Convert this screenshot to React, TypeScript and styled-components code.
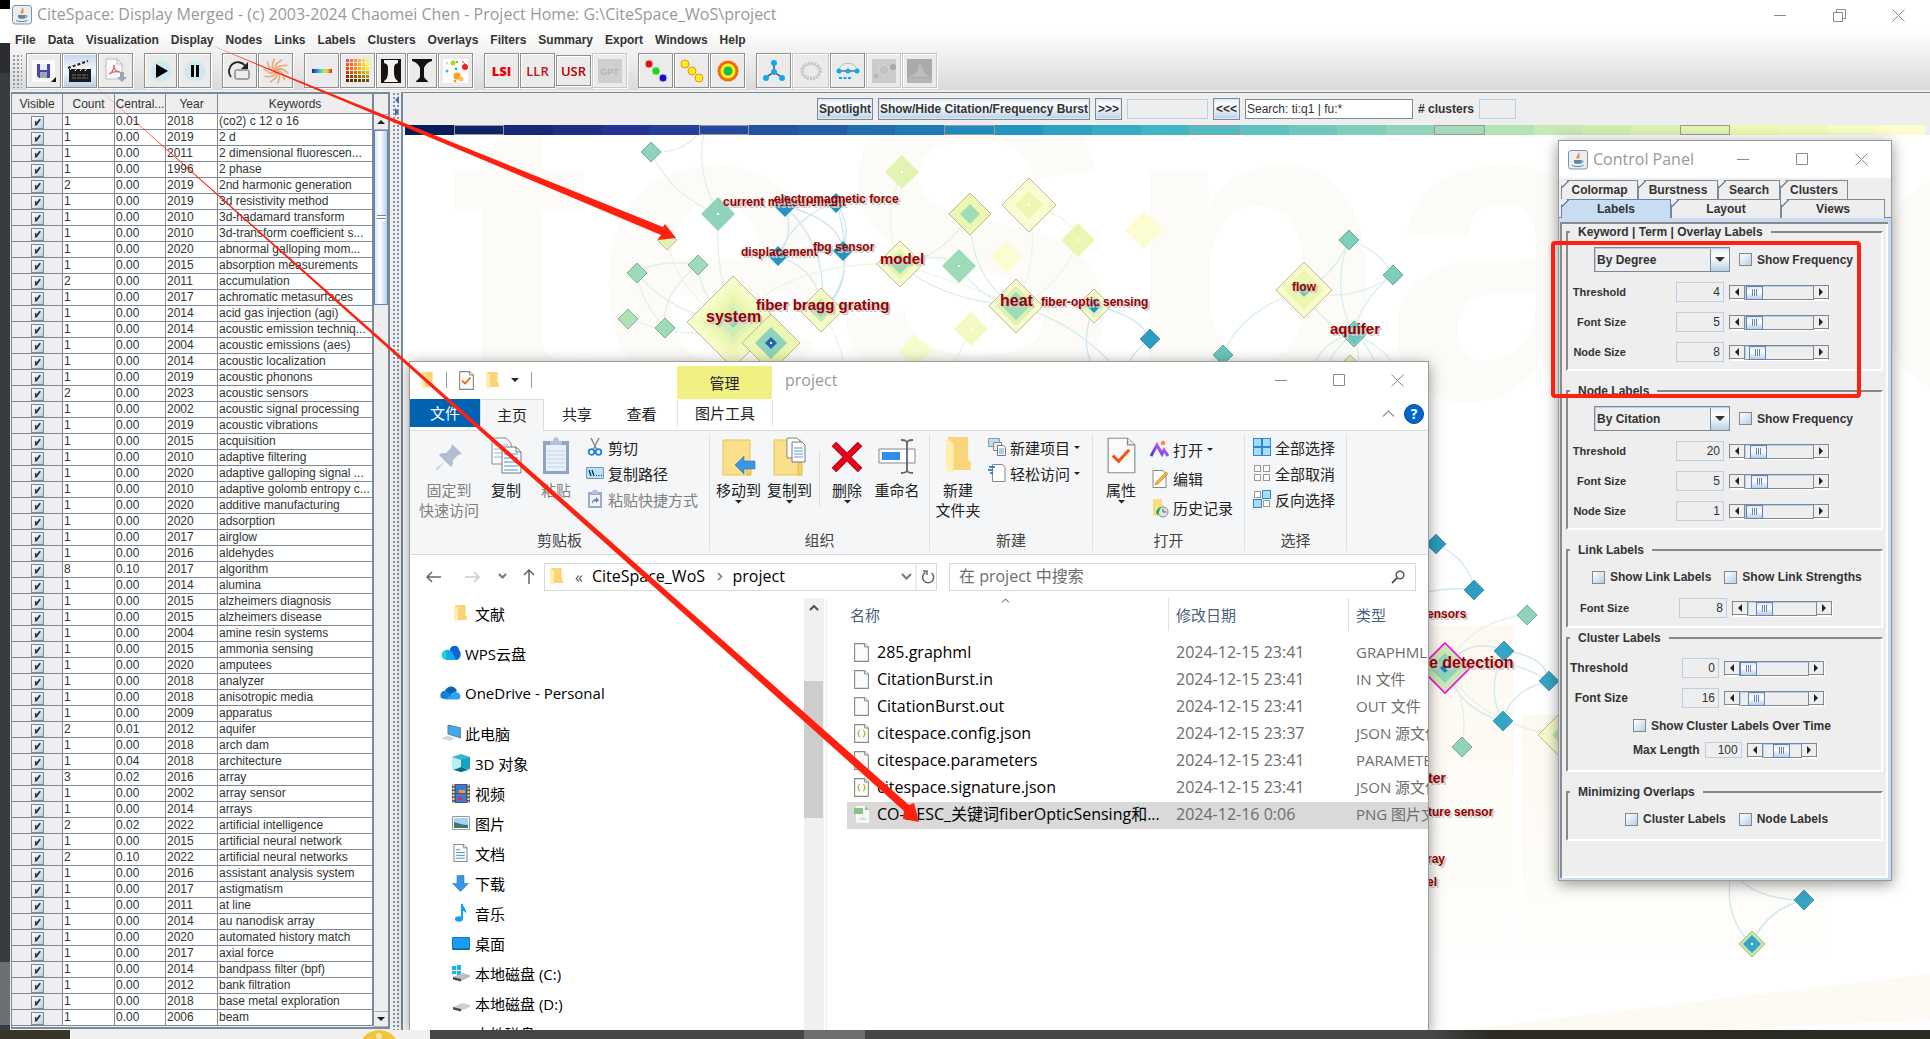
import React from 'react';
import styled, { createGlobalStyle, css } from 'styled-components';

const JAVA = `"Liberation Sans", Arial, sans-serif`;
const WIN = `"Open Sans", "Noto Sans CJK SC", sans-serif`;
const LINE = '#7a8a99';
const METAL = 'linear-gradient(#e4edf6 0%, #ffffff 35%, #b8cfe5 100%)';

const GlobalStyle = createGlobalStyle`
  * { box-sizing: border-box; }
  body { margin: 0; overflow: hidden; font-family: ${JAVA}; font-size: 12px; color: #333; }
  button, input, select { font: inherit; color: inherit; margin: 0; padding: 0; border-radius: 0; }
  svg { display: block; flex: none; }
`;

/* ---------- desktop ---------- */
const Desktop = styled.div`
  position: relative; height: 100vh; display: flex; flex-direction: column;
  background: #fff; overflow: hidden;
`;
const Upper = styled.div`
  position: relative; flex: 1; min-height: 0; display: flex; overflow: hidden;
`;
const BehindStrip = styled.div`
  width: 10px; flex: none;
  background: linear-gradient(#000 0 9px, #fff 9px 43px, #2b2d30 43px 73px, #363c3f 73px 962px, #6b6e73 962px 1025px, #363c3f 1025px);
`;
const AppWindow = styled.main`flex: 1; min-width: 0; display: flex; flex-direction: column; background: #eee;`;

const TitleBar = styled.header<{ $h: number }>`
  display: flex; align-items: center; height: ${p => p.$h}px; flex: none; background: #fff;
  font-family: ${WIN}; font-size: 16px; color: #999;
`;
const TitleText = styled.h1`margin: 0; font-size: inherit; font-weight: 400; white-space: nowrap; flex: 1; line-height: 20px; padding-bottom: 2px;`;
const WinButtons = styled.div<{ $gap: number; $end: number }>`
  display: flex; gap: ${p => p.$gap}px; padding-right: ${p => p.$end}px;
`;
const WinButton = styled.button`
  border: 0; background: none; width: 13px; height: 13px; color: #8a8a8a;
`;

const Chrome = styled.div`background: linear-gradient(#fff, #dadada); height: 62px; flex: none; border-bottom: 2px solid #eee;`;
const MenuBar = styled.nav`display: flex; gap: 12px; height: 20px; padding-left: 5px; align-items: center;`;
const MenuItem = styled.button`border: 0; background: none; font-weight: 700; line-height: 20px;`;
const ToolBar = styled.div`display: flex; align-items: center; height: 41px; gap: 11px;`;
const Grip = styled.div`
  width: 10px; height: 34px; margin-left: 2px; margin-right: -7px;
  background: radial-gradient(circle, #8a99a8 0.8px, transparent 1px) 0 0 / 4px 4px;
`;
const ToolGroup = styled.div`display: flex; gap: 1px; align-items: center;`;
const Tool = styled.button<{ $w?: number; $h?: number; $on?: boolean; $off?: boolean }>`
  width: ${p => p.$w ?? 35}px; height: ${p => p.$h ?? 35}px;
  display: flex; align-items: center; justify-content: center; overflow: hidden;
  border: 1px solid ${p => (p.$off ? '#c6c6c6' : '#8f8f8f')};
  box-shadow: inset 1px 1px 0 #fff, 1px 1px 0 #fff;
  background: ${p => (p.$on ? 'linear-gradient(#c3d6ea, #f4f8fc 50%, #b8cfe5)' : '#ebebeb')};
`;
const ToolWord = styled.span<{ $c: string; $b?: boolean }>`
  font-family: "Open Sans", sans-serif; font-size: 13px; line-height: 20px;
  font-weight: ${p => (p.$b ? 800 : 600)}; color: ${p => p.$c};
`;
const GptTile = styled.span`
  background: #cfcfcf; color: #b5b5b5; width: 24px; height: 24px; font-size: 9px; line-height: 26px; font-weight: 700;
`;

const Split = styled.div`flex: 1; min-height: 0; display: flex;`;

/* ---------- keyword table ---------- */
const TablePane = styled.section`
  display: flex; flex: none; margin: 0 2px 1px 1px; background: #eee; overflow: hidden;
  border: 2px solid ${LINE}; border-left-width: 1px;
`;
const Keywords = styled.table`
  border-collapse: separate; border-spacing: 0; table-layout: fixed; width: 362px; flex: none;
  font-size: 12px; align-self: flex-start; border-right: 2px solid ${LINE};
  th { height: 20px; font-weight: 400; padding: 2px 0 0; line-height: 17px; border-right: 1px solid ${LINE}; border-bottom: 1px solid ${LINE}; background: #eee; }
  td { height: 16px; padding: 0 0 0 1px; line-height: 15px; white-space: nowrap; overflow: hidden; background: #fff;
    border-right: 1px solid ${LINE}; border-bottom: 1px solid ${LINE}; }
  td:first-child { background: #eee; text-align: center; padding: 0; }
  th:last-child, td:last-child { border-right: 0; }
`;
const ColV = styled.col`width: 51px;`;
const ColC = styled.col`width: 52px;`;
const ColCe = styled.col`width: 51px;`;
const ColY = styled.col`width: 52px;`;

const boxLook = css`
  appearance: none; width: 13px; height: 13px; border: 1px solid ${LINE};
  background: linear-gradient(135deg, #fff, #dce7f2 50%, #b8cfe5); flex: none;
`;
const Tick = styled.input.attrs({ type: 'checkbox' })`
  ${boxLook}
  display: block; margin: 1px auto 0; position: relative;
  &:checked::after { content: ''; position: absolute; left: 3px; top: 2px; width: 6px; height: 7px;
    background: #333; clip-path: polygon(0 35%, 30% 35%, 30% 60%, 85% 0, 100% 0, 100% 25%, 35% 100%, 0 100%); }
`;
const VBar = styled.div`width: 14px; display: flex; flex-direction: column; margin-top: 20px;`;
const VBarBtn = styled.button`
  height: 16px; border: 1px solid #a5b1bd; border-width: 1px 0; background: #eee; display: flex; align-items: center; justify-content: center; flex: none;
`;
const VThumb = styled.div`
  height: 175px; border: 1px solid #6382bf; background: linear-gradient(90deg, #dce7f3, #fff 40%, #b8cfe5);
  display: flex; align-items: center; justify-content: center;
  &::after { content: ''; width: 9px; height: 6px; background: repeating-linear-gradient(#6382bf 0 1px, #fff 1px 3px); }
`;
const Fill = styled.div`flex: 1;`;
const Divider = styled.div`
  width: 9px; flex: none; display: flex; flex-direction: column; align-items: center; gap: 4px; padding-top: 4px;
  background: radial-gradient(circle, #8494a4 0.8px, transparent 1px) 0 40px / 4px 4px, #eee;
`;

/* ---------- visualization ---------- */
const GraphPane = styled.section`
  flex: 1; min-width: 0; display: flex; flex-direction: column;
  border-left: 2px solid ${LINE}; border-top: 1px solid ${LINE};
`;
const SearchBar = styled.div`
  height: 32px; flex: none; display: flex; align-items: center; justify-content: center; gap: 5px; font-weight: 700;
`;
const MetalButton = styled.button`
  height: 22px; min-width: 27px; padding: 0 1px; border: 1px solid ${LINE}; background: ${METAL}; font-weight: 700; white-space: nowrap;
  box-shadow: inset 0 0 0 1px #dfe9f3;
`;
const Field = styled.input<{ $w: number; $h?: number; $off?: boolean; $right?: boolean }>`
  width: ${p => p.$w}px; height: ${p => p.$h ?? 20}px; flex: none; font-weight: 400; padding: 0 ${p => (p.$right ? 3 : 1)}px 0 1px;
  background: ${p => (p.$off ? '#eee' : '#fff')}; border: 1px solid ${p => (p.$off ? '#b8cfe5' : LINE)};
  text-align: ${p => (p.$right ? 'right' : 'left')};
`;
const Years = styled.div`display: flex; height: 10px; flex: none; padding: 0 5px 0 2px;`;
const Year = styled.div<{ $c: string; $mark: boolean }>`
  flex: 1; background: ${p => p.$c}; border: ${p => (p.$mark ? '1px solid #999' : '0')};
`;
const Canvas = styled.div`flex: 1; min-height: 0; background: #fff; overflow: hidden;`;

/* ---------- floating windows ---------- */
const Floating = styled.section`
  position: absolute; background: #fff; border: 1px solid #9b9b9b; box-shadow: 0 3px 14px rgba(0, 0, 0, 0.42);
  display: flex; flex-direction: column;
`;
const ExplorerWin = styled(Floating)`
  left: 409px; top: 361px; bottom: -1px; width: 1020px; font-family: ${WIN}; font-size: 15px; color: #222; overflow: hidden;
`;
const ExTop = styled.div`height: 37px; display: flex; flex: none; align-items: center; padding-left: 11px;`;
const Quick = styled.div`display: flex; align-items: center; width: 256px; gap: 12px; padding-bottom: 1px;`;
const QSep = styled.span`width: 1px; height: 16px; background: #999;`;
const ManageTab = styled.div`
  width: 95px; align-self: flex-end; height: 33px; background: #f0f083; text-align: center; line-height: 34px;
`;
const ExTitle = styled.span`margin-left: 13px; color: #999; flex: 1; padding-bottom: 2px; font-size: 16px; line-height: 20px;`;
const Tabs = styled.div`display: flex; height: 32px; flex: none; border-bottom: 1px solid #dadbdc; position: relative;`;
const Tab = styled.button<{ $w: number; $kind?: 'file' | 'on' | 'ctx' }>`
  width: ${p => p.$w}px; height: 31px; border: 0; background: none; text-align: center; line-height: 28px; padding-bottom: 2px;
  ${p => p.$kind === 'file' && css`background: #0063b1; color: #fff; height: 28px;`}
  ${p => p.$kind === 'on' && css`background: #f5f6f7; border: 1px solid #dadbdc; border-bottom: 0; height: 32px;`}
  ${p => p.$kind === 'ctx' && css`border: solid #e3e3e3; border-width: 0 1px; margin-left: 4px; height: 28px;`}
`;
const Ribbon = styled.div`height: 124px; flex: none; display: flex; background: #f5f6f7; border-bottom: 1px solid #dadbdc; padding: 3px 0;`;
const Group = styled.div<{ $w: number; $pad: number }>`
  width: ${p => p.$w}px; padding-left: ${p => p.$pad}px; border-right: 1px solid #e0e1e2; display: flex; flex-direction: column;
`;
const GroupBody = styled.div`flex: 1; display: flex; align-items: flex-start;`;
const GroupName = styled.div<{ $pad: number }>`
  text-align: center; line-height: 20px; margin-left: -${p => p.$pad}px; color: #444; padding-bottom: 1px;
`;
const Big = styled.button<{ $w: number; $off?: boolean }>`
  width: ${p => p.$w}px; padding: 3px 0 0; border: 0; background: none; display: flex; flex-direction: column; align-items: center;
  line-height: 20px; white-space: nowrap; color: ${p => (p.$off ? '#808080' : '#222')};
`;
const BigIcon = styled.span`height: 43px; display: flex;`;
const SmallList = styled.div<{ $pad: number }>`padding-left: ${p => p.$pad}px;`;
const Small = styled.button<{ $h: number; $off?: boolean }>`
  height: ${p => p.$h}px; border: 0; background: none; display: flex; align-items: center; gap: 4px; white-space: nowrap;
  color: ${p => (p.$off ? '#808080' : '#222')};
`;
const VSep = styled.span`width: 1px; height: 55px; background: #dcdddd; margin: 17px 1px 0 4px;`;
const AddressRow = styled.div`display: flex; align-items: center; height: 43px; flex: none; padding: 0 12px 0 16px;`;
const NavIcon = styled.button<{ $w: number }>`
  width: ${p => p.$w}px; height: 20px; border: 0; background: none; display: flex; align-items: center;
`;
const Address = styled.div`
  flex: 1; height: 28px; border: 1px solid #d9d9d9; display: flex; align-items: center; color: #000; padding-left: 5px; margin-right: 12px;
  font-size: 16px; line-height: 22px;
`;
const Crumb = styled.a`color: inherit; text-decoration: none; white-space: nowrap; padding-bottom: 2px;`;
const CrumbSep = styled.span<{ $l: number; $r: number }>`margin: 0 ${p => p.$r}px 0 ${p => p.$l}px; display: flex; color: #555;`;
const SearchBox = styled.label`
  width: 467px; height: 28px; border: 1px solid #d9d9d9; display: flex; align-items: center; padding: 0 10px 0 9px; font-size: 16px;
`;
const SearchInput = styled.input`
  border: 0; outline: 0; flex: 1; min-width: 0; height: 26px; background: none; padding-bottom: 2px;
  &::placeholder { color: #6d6d6d; opacity: 1; }
`;
const Body = styled.div`flex: 1; min-height: 0; display: flex;`;
const Tree = styled.ul`
  list-style: none; margin: 0; padding: 0 0 0 30px; width: 394px; flex: none; overflow: hidden; color: #000;
`;
const TreeItem = styled.li<{ $deep?: boolean; $gap?: boolean }>`
  height: 30px; display: flex; align-items: center; white-space: nowrap; margin-bottom: ${p => (p.$gap ? 10 : 0)}px;
  padding-left: ${p => (p.$deep ? 10 : 0)}px; gap: 4px;
`;
const TreeIcon = styled.span`width: 21px; display: flex; justify-content: center;`;
const TreeScroll = styled.div`width: 20px; background: #f0f0f0; flex: none; display: flex; flex-direction: column; align-items: stretch;`;
const ScrollUp = styled.button`border: 0; background: none; height: 83px; display: flex; justify-content: center; padding-top: 7px; color: #505050;`;
const ScrollThumb = styled.div`height: 137px; background: #cdcdcd; margin-right: 1px;`;
const FilePane = styled.div`flex: 1; min-width: 0; margin-left: 2px; border-left: 1px solid #ececec; padding-left: 20px; overflow: hidden;`;
const Files = styled.table`
  width: 650px; table-layout: fixed; border-collapse: separate; border-spacing: 0;
  th { height: 33px; font-weight: 400; text-align: left; color: #4c607a; padding: 0 0 0 7px; border-right: 1px solid #e0e0e0; position: relative; }
  th:first-child { padding-left: 3px; }
  td { height: 27px; line-height: 24px; font-size: 16px; padding: 0 0 3px 7px; white-space: nowrap; overflow: hidden; color: #6d6d6d; }
  td:last-child { font-size: 15px; }
  tbody::before { content: ''; display: block; height: 9px; }
`;
const FileRow = styled.tr<{ $sel?: boolean }>`background: ${p => (p.$sel ? '#d9d9d9' : 'transparent')};`;
const FileName = styled.span`display: flex; align-items: center; gap: 8px; color: #000;`;
const SortMark = styled.span`position: absolute; left: 154px; top: 0;`;

/* ---------- control panel ---------- */
const PanelWin = styled(Floating)`right: 38px; top: 140px; width: 334px; height: 741px; background: #eee; font-weight: 700;`;
const TabRow = styled.div`display: flex; height: 19px; padding-left: 2px; flex: none;`;
const PTab = styled.button<{ $w: number; $on?: boolean }>`
  width: ${p => p.$w}px; height: 19px; font-weight: 700; line-height: 18px; border: 1px solid ${p => (p.$on ? '#6382bf' : LINE)}; border-bottom: 0;
  background: linear-gradient(135deg, transparent 0 4px, ${p => (p.$on ? '#6382bf' : LINE)} 4px 5px, ${p => (p.$on ? '#c8ddf2' : '#eee')} 5px);
  clip-path: polygon(6px 0, 100% 0, 100% 100%, 0 100%, 0 6px);
`;
const PBody = styled.div`
  flex: 1; border: solid #c8ddf2; border-width: 4px 3px 2px 1px; box-shadow: inset 2px 2px 0 #8a8a8a, inset -2px -2px 0 #fff, 0 -1px 0 #6382bf;
  padding: 3px 5px 0 6px;
`;
const Frame = styled.fieldset<{ $h: number; $top: number; $mb?: number }>`
  margin: 0 0 ${p => p.$mb ?? 13}px; padding: ${p => p.$top}px 0 0; height: ${p => p.$h}px; min-width: 0;
  border: 2px solid; border-color: #888 #fff #fff #888;
`;
const Legend = styled.legend`padding: 0 8px; margin-left: 2px; line-height: 14px; font-size: 12px;`;
const Row = styled.div<{ $h: number; $pad?: number; $gap?: number }>`
  display: flex; align-items: center; height: ${p => p.$h}px; padding-left: ${p => p.$pad ?? 0}px; gap: ${p => p.$gap ?? 5}px;
`;
const Name = styled.label<{ $w?: number; $sm?: boolean; $mr?: number }>`
  ${p => p.$w && `width: ${p.$w}px;`} text-align: right; font-size: ${p => (p.$sm ? 11 : 12)}px; margin-right: ${p => p.$mr ?? 0}px; white-space: nowrap;
`;
const CheckLabel = styled.label`display: flex; align-items: center; gap: 5px; white-space: nowrap;`;
const CheckBox = styled.input.attrs({ type: 'checkbox' })`${boxLook}`;
const ComboWrap = styled.span`
  display: flex; position: relative;
  &::after { content: ''; position: absolute; right: 9px; top: 10px; border: 5px solid transparent; border-top-color: #333; border-bottom: 0; pointer-events: none; }
`;
const Combo = styled.select`
  appearance: none; width: 136px; height: 25px; border: 1px solid ${LINE}; font-weight: 700; padding-left: 2px; margin-right: 4px;
  background: linear-gradient(90deg, ${LINE} 1px, transparent 1px) right 0 top 0 / 19px 100% no-repeat,
    linear-gradient(#e4edf6, #fff 40%, #b8cfe5) right 0 top 0 / 19px 100% no-repeat, #eee;
  box-shadow: inset 1px 1px 0 #b8cfe5;
`;
const HBar = styled.div<{ $w: number }>`
  width: ${p => p.$w}px; height: 15px; display: flex; border: 1px solid ${LINE}; border-bottom-color: #fff; box-shadow: 1px 1px 0 #fff; flex: none;
`;
const HBtn = styled.button`width: 14px; border: 0; background: #eee; display: flex; align-items: center; justify-content: center; box-shadow: inset 0 -1px 0 ${LINE};`;
const thumb = css`
  appearance: none; width: 17px; height: 14px; border: 1px solid #6382bf; border-radius: 0;
  background: repeating-linear-gradient(90deg, #6382bf 0 1px, #fff 1px 2px) center / 5px 7px no-repeat, linear-gradient(#dce7f3, #fff 40%, #b8cfe5);
`;
const Range = styled.input.attrs({ type: 'range' })`
  appearance: none; flex: 1; min-width: 0; height: 14px; background: #eee; border: solid ${LINE}; border-width: 0 1px;
  box-shadow: inset 1px 1px 0 #b8cfe5, inset 0 -1px 0 ${LINE};
  &::-webkit-slider-thumb { ${thumb} }
`;

/* ---------- overlay & task bar ---------- */
const Marks = styled.svg`position: absolute; left: 0; top: 0; width: 100%; height: 100%; pointer-events: none;`;
const TaskBar = styled.footer`height: 9px; flex: none; display: flex; background: #464646; overflow: hidden;`;
const TaskPart = styled.div<{ $w: number; $c: string }>`width: ${p => p.$w}px; background: ${p => p.$c}; flex: none; display: flex; justify-content: flex-end;`;
const TaskRest = styled.div`flex: 1; background: linear-gradient(90deg, #464646, #2c2b23 60px);`;

/* ---------- icons ---------- */
const Java = () => (
  <svg width="20" height="20" viewBox="0 0 20 20">
    <rect x=".5" y=".5" width="19" height="18.5" rx="2.5" fill="#e9eef2" stroke="#7e93a5" />
    <path d="M10.6 3c1.500 1.800-3 2.800-1.200 5.600M12 5.500c-1.800 1-1.800 1.800-.8 3" stroke="#ea8a3c" strokeWidth="1.300" fill="none" />
    <path d="M6 10h7.500v1.500c0 1.500-1 2.300-2.200 2.300H8.200C7 13.800 6 13 6 11.500z" fill="#5f86a6" />
    <path d="M13.500 10.500c2.300-.5 2.300 2-.6 2.200M4 15.500c3 1.500 9 1.500 11.500-.3" stroke="#5f86a6" fill="none" />
  </svg>
);
const Min = () => <svg width="13" height="13"><path d="M0 6.500h12" stroke="currentColor" /></svg>;
const Max = () => <svg width="13" height="13"><path d="M.5.5h11v11H.5z" fill="none" stroke="currentColor" /></svg>;
const Restore = () => <svg width="13" height="13"><path d="M.5 3.500h9v9h-9zM3.500 3V.5h9v9H10" fill="none" stroke="currentColor" /></svg>;
const Close = () => <svg width="13" height="13"><path d="M.5.5l12 12M12.500.5l-12 12" stroke="currentColor" /></svg>;
const Tri = ({ d, s = 8, c = '#222' }: { d: 'up' | 'down' | 'left' | 'right'; s?: number; c?: string }) => {
  const h = s / 2;
  const p = { up: `0 ${h},${s} ${h},${h} 0`, down: `0 0,${s} 0,${h} ${h}`, left: `${h} 0,${h} ${s},0 ${h}`, right: `0 0,0 ${s},${h} ${h}` }[d];
  const tall = d === 'left' || d === 'right';
  return <svg width={tall ? h : s} height={tall ? s : h}><polygon points={p} fill={c} /></svg>;
};
const Chevron = ({ d, w = 12, c = '#777', sw = 1.5 }: { d: 'up' | 'down' | 'right'; w?: number; c?: string; sw?: number }) => {
  const h = w / 2;
  const p = d === 'up' ? `M1 ${h}L${h} 1L${w - 1} ${h}` : d === 'down' ? `M1 1L${h} ${h}L${w - 1} 1` : `M1 1L${h} ${h}L1 ${w - 1}`;
  return <svg width={d === 'right' ? h + 2 : w} height={d === 'right' ? w : h + 2}><path d={p} fill="none" stroke={c} strokeWidth={sw} /></svg>;
};
const Folder = ({ w = 13, h = 18 }: { w?: number; h?: number }) => (
  <svg width={w} height={h} viewBox="0 0 13 18" preserveAspectRatio="none">
    <path d="M1 0h10.500v11l1.500 1v4H1z" fill="#fcdc83" />
    <path d="M0 1l4 2v15l-4-2z" fill="#ffeeb0" /><path d="M4 3v13h8V12l-.5-1V0H1z" fill="#f8d070" opacity=".55" />
  </svg>
);
const Page = ({ w = 15, h = 19, children }: { w?: number; h?: number; children?: React.ReactNode }) => (
  <svg width={w} height={h} viewBox="0 0 15 19">
    <path d="M.6.6h10L14.400 4v14.400H.6z" fill="#fbfbfb" stroke="#8a8a8a" strokeWidth={w > 20 ? 0.6 : 1.1} /><path d="M10.600.6V4h3.800" fill="#eee" stroke="#8a8a8a" strokeWidth={w > 20 ? 0.6 : 1} />
    {children}
  </svg>
);
const Check = () => <path d="M3 9.500l3 3 5.500-6" stroke="#f0540e" strokeWidth="1.600" fill="none" />;

const SaveI = () => (<svg width="26" height="24" viewBox="0 0 26 24"><path d="M1 1h23v22H1z" fill="#fff" opacity=".75" /><path d="M6 5h13v14H8l-2-2z" fill="#4646b4" /><path d="M9 5h7v6H9z" fill="#e6ecfb" /><path d="M9 13h7v6H9z" fill="#9aa" /><path d="M25 18v5h-5z" fill="#111" /></svg>);
const ClapI = () => (<svg width="26" height="24" viewBox="0 0 26 24"><path d="M2 10h22v13H2z" fill="#1a1a1a" /><path d="M1 9l20-7" stroke="#222" strokeWidth="2" strokeDasharray="3 2" /><path d="M3 11l3-3M8 12l3-4M13 12l3-4M18 12l3-4" stroke="#fff" /><path d="M5 16h16M5 19h16" stroke="#777" strokeDasharray="4 1" /></svg>);
const PdfI = () => (<svg width="26" height="26" viewBox="0 0 26 26"><path d="M3 1h11l5 5v15H3z" fill="#fafafa" stroke="#bbb" /><path d="M14 1v5h5" fill="none" stroke="#bbb" /><path d="M6 16c5-2 5-6 5-9 0 4 2 7 6 7-4-1-8 0-11 2z" fill="none" stroke="#d66" strokeWidth="1.300" /><path d="M17 14h4v5h3l-5 5-5-5h3z" fill="#9aa6b5" /></svg>);
const PlayI = () => (<svg width="24" height="24"><circle cx="12" cy="12" r="10.500" fill="#cdeaf2" /><path d="M7 5l12 7-12 7z" fill="#000" /></svg>);
const PauseI = () => (<svg width="24" height="24"><circle cx="12" cy="12" r="10.500" fill="#cdeaf2" /><path d="M8 6h3v12H8zM13 6h3v12h-3z" fill="#000" /></svg>);
const RotI = () => (<svg width="26" height="24"><path d="M4 18a8.500 8.500 0 0 1 14-11.500" fill="none" stroke="#222" strokeWidth="1.800" /><path d="M21 3v7h-7z" fill="#222" /><rect x="8" y="11" width="14" height="9" rx="1.500" fill="#ececec" stroke="#555" /></svg>);
const StarI = () => (
  <svg width="30" height="26" viewBox="-15 -13 30 26">
    {[0, 36, 72, 108, 144, 180, 216, 252, 288, 324].map(a => <path key={a} transform={`rotate(${a})`} d="M0 0c4-4 7-2 12 2" stroke="#eba878" strokeWidth="1.600" fill="none" strokeLinecap="round" />)}
  </svg>
);
const RainbowI = () => (<svg width="22" height="24"><defs><linearGradient id="rb"><stop offset="0" stopColor="#226" /><stop offset=".3" stopColor="#39f" /><stop offset=".55" stopColor="#6f6" /><stop offset=".75" stopColor="#fc3" /><stop offset="1" stopColor="#d22" /></linearGradient></defs><rect x="1" y="10" width="20" height="4" fill="url(#rb)" /></svg>);
const GridI = () => (
  <svg width="24" height="24">
    {Array.from({ length: 36 }, (_, i) => {
      const c = i % 6, r = Math.floor(i / 6), k = 1 - Math.max(0, r - 2) * 0.2;
      return <rect key={i} x={c * 4} y={r * 4} width="3" height="3" fill={`rgb(${255 * k},${(70 + c * 35) * k},${Math.max(0, 80 - r * 40)})`} />;
    })}
  </svg>
);
const VaseI = ({ inv }: { inv?: boolean }) => (
  <svg width="20" height="24" viewBox="0 0 20 24">
    {inv && <path d="M0 0h20v24H0z" fill="#191310" />}
    <path d={inv ? 'M3 1h14v3c-3 1-4 2-4 5 0 5 0 7 1 10 0 1 3 2 3 4H3c0-2 3-3 3-4 1-3 1-5 1-10 0-3-1-4-4-5z' : 'M0 0h20v2c-4 1-7 4-8 7v8c0 3 4 4 4 6H4c0-2 4-3 4-6V9C7 6 4 3 0 2z'} fill={inv ? '#f4f4f4' : '#111'} />
  </svg>
);
const SplashI = () => (
  <svg width="25" height="24" viewBox="0 0 25 24"><path d="M0 0h25v24H0z" fill="#fff" />
    <circle cx="10" cy="4" r="2.500" fill="#a6d820" /><circle cx="14" cy="3" r="1.300" fill="#70c860" /><circle cx="22" cy="8" r="3" fill="#e82020" /><path d="M19 2l4 4" stroke="#e33" />
    <circle cx="14" cy="17" r="3.500" fill="#f8a020" /><circle cx="18" cy="20" r="2.500" fill="#fbc060" /><circle cx="12" cy="22" r="1.500" fill="#f8a020" /><circle cx="4" cy="12" r="1.500" fill="#30b8e0" /><circle cx="13" cy="10" r="1.200" fill="#2ab" /><circle cx="4" cy="4" r="1.500" fill="#c4ecb0" />
  </svg>
);
const DotsI = ({ a, b, c, s }: { a: string; b: string; c: string; s: string }) => (
  <svg width="26" height="26"><circle cx="6" cy="6" r="4" fill={a} stroke={s} /><circle cx="13" cy="13" r="4" fill={b} stroke={s} /><circle cx="20" cy="20" r="4" fill={c} stroke={s} /></svg>
);
const RingI = () => (<svg width="22" height="22"><circle cx="11" cy="11" r="10.500" fill="#f26a10" /><circle cx="11" cy="11" r="7.500" fill="#f8f010" /><circle cx="11" cy="11" r="4.500" fill="#10c060" /></svg>);
const NetI = () => (<svg width="24" height="24"><path d="M12 4v9L3 19M12 13l9 6" stroke="#333" fill="none" strokeWidth="1.300" />{[[12, 4], [12, 13], [4, 19], [20, 19]].map(([x, y]) => <circle key={`${x}${y}`} cx={x} cy={y} r="3" fill="#12a8ec" />)}</svg>);
const LoopI = () => (<svg width="26" height="24"><ellipse cx="13" cy="12" rx="9" ry="7.500" fill="none" stroke="#c4c4c4" strokeWidth="3.500" strokeDasharray="2 1" /></svg>);
const TimeI = () => (<svg width="26" height="24"><path d="M3 12h20" stroke="#333" /><path d="M4 11c1-9 17-9 18 0" stroke="#8cd" fill="none" /><circle cx="4" cy="12" r="2.500" fill="#12a8ec" /><circle cx="13" cy="12" r="2.500" fill="#12a8ec" /><circle cx="22" cy="12" r="2.500" fill="#12a8ec" /><path d="M4 19h12" stroke="#12a8ec" strokeWidth="2" strokeDasharray="3 1.500" /></svg>);
const MistI = () => (<svg width="24" height="24"><path d="M0 0h24v24H0z" fill="#cbcbcb" /><circle cx="12" cy="11" r="5" fill="#c2c2c2" stroke="#d8d8d8" /><circle cx="21" cy="8" r="3" fill="#a8a8a8" /><circle cx="4" cy="17" r="2.500" fill="#b8b8b8" /></svg>);
const PeakI = () => (<svg width="25" height="24"><path d="M0 0h25v24H0z" fill="#aaa" /><path d="M13 4l4 9 6 5H2l8-5z" fill="#bdbdbd" /><path d="M0 19h25v5H0z" fill="#b6b6b6" /></svg>);

const PinI = () => (<svg width="28" height="38" viewBox="0 0 28 38"><path d="M17 7l10 10-4 1-5 5c0 3 0 5-2 7l-6-6-8 9-1-1 9-8-6-6c2-2 4-2 7-2l5-5z" fill="#b1bed0" /></svg>);
const CopyI = () => (
  <svg width="32" height="38" viewBox="0 0 32 38">
    <path d="M2 1h14l5 5v21H2z" fill="#fdfdfd" stroke="#8a8a8a" /><path d="M4 8h14M4 12h14M4 16h14M4 20h14" stroke="#8bb8e8" />
    <path d="M12 10h14l5 5v21H12z" fill="#fdfdfd" stroke="#777" /><path d="M26 10v5h5" fill="none" stroke="#777" /><path d="M14 17h14M14 21h14M14 25h14M14 29h14M14 33h14" stroke="#4a90dc" />
  </svg>
);
const PasteI = () => (<svg width="28" height="38" viewBox="0 0 28 38"><path d="M1 4h26v33H1z" fill="#8fa3c4" /><path d="M4 8h20v26H4z" fill="#eaf0f8" /><path d="M8 4h3c0-5 6-5 6 0h3v4H8z" fill="#b4c2d8" /><path d="M5 14h18M5 18h18M5 22h18M5 26h18M5 30h18" stroke="#c3d3e8" /></svg>);
const BigFolder = ({ children }: { children?: React.ReactNode }) => (
  <svg width="34" height="40" viewBox="0 0 34 40"><path d="M1 3h27v35H1z" fill="#fbe08c" stroke="#e8c352" /><path d="M25 38V27c0-2 4-2 4 0v11z" fill="#f7d265" stroke="#e0b94a" />{children}</svg>
);
const DelI = () => (<svg width="32" height="38"><path d="M3 7l26 26M29 7L3 33" stroke="#7a1a1a" strokeWidth="6.500" /><path d="M3 7l26 26M29 7L3 33" stroke="#e8001a" strokeWidth="5.500" /></svg>);
const RenI = () => (<svg width="38" height="38" viewBox="0 0 38 38"><path d="M1 12h36v14H1z" fill="#fff" stroke="#888" /><path d="M4 15h18v8H4z" fill="#2f8fe8" /><path d="M23 3c5 0 6 1 6 4v25c0 3-1 4-6 4M35 3c-5 0-6 1-6 4v25c0 3 1 4 6 4" fill="none" stroke="#666" strokeWidth="1.800" /></svg>);
const CutI = () => (<svg width="18" height="20" viewBox="0 0 18 20"><path d="M5 1l6 12M13 1L7 13" stroke="#888" strokeWidth="1.500" /><circle cx="5.500" cy="15" r="2.800" fill="none" stroke="#1e86c8" strokeWidth="1.800" /><circle cx="12.500" cy="15" r="2.800" fill="none" stroke="#1e86c8" strokeWidth="1.800" /></svg>);
const PathI = () => (<svg width="18" height="20" viewBox="0 0 18 20"><path d="M.5 4.500h17v11H.5z" fill="#b8e2fb" stroke="#7a9ab4" /><path d="M3 7l2 6M6 7l2 6M10 12.500h1M12.500 12.500h1M15 12.500h1" stroke="#123" strokeWidth="1.200" /></svg>);
const ShortI = () => (<svg width="18" height="20" viewBox="0 0 18 20"><path d="M2 3h14v16H2z" fill="#9aacc8" /><path d="M4 6h10v11H4z" fill="#eef3fa" /><path d="M6 3c0-3 6-3 6 0v2H6z" fill="#b4c2d8" /><path d="M6 15c0-4 2-5 4-5V8l3 3-3 3v-2c-2 0-3 1-4 3z" fill="#6a7f9c" /></svg>);
const NewI = () => (<svg width="18" height="20" viewBox="0 0 18 20"><path d="M.5 1.500h11v8H.5z" fill="#b9e0ee" stroke="#89a" /><path d="M5.500 5.500h8v8h-8z" fill="#eee" stroke="#888" /><path d="M9.500 8.500h6l2 2v8h-8z" fill="#fff" stroke="#777" /><path d="M11 12h5M11 14h5M11 16h5" stroke="#5a9ae0" /></svg>);
const EasyI = () => (<svg width="18" height="20" viewBox="0 0 18 20"><path d="M4.500 1.500h10l2.500 3v14H4.500z" fill="#fdfdfd" stroke="#888" /><path d="M1 4h6M0 7h5M2 10h3" stroke="#1467b4" strokeWidth="1.600" /></svg>);
const OpenI = () => (<svg width="19" height="20" viewBox="0 0 19 20"><defs><linearGradient id="oa" x1="0" y1="1" x2="1" y2="0"><stop offset="0" stopColor="#3a3af0" /><stop offset=".6" stopColor="#a050f0" /><stop offset="1" stopColor="#ff7080" /></linearGradient></defs><path d="M1 17L7 6l5 9 2-4 4 6" fill="none" stroke="url(#oa)" strokeWidth="3" /><circle cx="13" cy="4" r="2.300" fill="#ff8a50" /></svg>);
const EditI = () => (<svg width="19" height="20" viewBox="0 0 19 20"><path d="M3 1.500h10l3 3v14H3z" fill="#fff" stroke="#888" /><path d="M5 16l1-3L16 3l2 2L8 15z" fill="#f7b733" stroke="#c98a1a" strokeWidth=".7" /></svg>);
const HistI = () => (<svg width="19" height="20" viewBox="0 0 19 20"><path d="M3 1h9l1 9H3z M3 1l3 2v16l-3-2z" fill="#fbdc84" /><circle cx="13" cy="14" r="5" fill="#dfe3e6" stroke="#888" /><path d="M13 11v3h3" stroke="#555" fill="none" /><path d="M6 15c0-4 3-6 5-6l-2 5-1 4z" fill="#27b140" /></svg>);
const SelI = ({ on }: { on: number[] }) => (
  <svg width="18" height="20" viewBox="0 0 18 20">{[0, 1, 2, 3].map(i => { const a = on.includes(i); return <rect key={i} x={(i % 2) * 9 + (a ? 0.5 : 1.5)} y={Math.floor(i / 2) * 9 + (a ? 1.5 : 2.5)} width={a ? 8 : 6} height={a ? 8 : 6} fill={a ? '#a9dcfb' : '#fff'} stroke={a ? '#2a8ad4' : '#999'} />; })}</svg>
);

const treeIcons: Record<string, React.ReactNode> = {
  folder: <Folder h={17} />,
  wps: <svg width="20" height="16" viewBox="0 0 20 16"><path d="M9 4c2-5 9-4 9 1 3 2 2 10-3 10H8z" fill="#1460d8" /><circle cx="5.500" cy="10" r="5" fill="#20d8c8" /><path d="M5 5c5-1 7 3 10 10H5z" fill="#18a8ec" /></svg>,
  one: <svg width="21" height="14" viewBox="0 0 21 14"><path d="M5 5c2-6 10-6 12 0l-9 5z" fill="#0c62b8" /><path d="M1 12C-1 8 2 4 6 5l12 8H4z" fill="#1480d8" /><path d="M5 13.500L15 6c5-1 7 5 4 7.500z" fill="#2aa4ee" /></svg>,
  pc: <svg width="20" height="18" viewBox="0 0 20 18"><path d="M7 1l13 3v10L7 10z" fill="#3fa9f0" stroke="#6a7a88" /><path d="M0 14l7-2 7 2-5 3z" fill="#cfd6dc" /></svg>,
  cube: <svg width="18" height="18" viewBox="0 0 18 18"><path d="M0 3l9-3 9 3v12l-9 3-9-3z" fill="#38b8d0" /><path d="M0 3l9 3v9l-9 0z" fill="#b8eef4" /><path d="M9 6l9-3v12l-9-2z" fill="#1aa0c4" /><path d="M2 16l7-3 7 3-7 2z" fill="#0a6a80" /></svg>,
  video: <svg width="18" height="19"><path d="M0 0h18v19H0z" fill="#555" /><path d="M4 1h10v8H4zM4 10h10v8H4z" fill="#3a7ae0" /><path d="M7 6h6v3H7z" fill="#e8a020" /><path d="M6 13h4v3H6z" fill="#d33" /><path d="M1.500 0v19M16.500 0v19" stroke="#ddd" strokeWidth="2" strokeDasharray="2 1.500" /></svg>,
  pic: <svg width="18" height="14"><path d="M.5.5h17v13H.5z" fill="#fff" stroke="#999" /><path d="M2 2h14v10H2z" fill="#9fd3f8" /><path d="M2 6c4 1 9 3 14 3v3H2z" fill="#3c7a6c" /></svg>,
  doc: <Page w={15} h={18}><path d="M3 6h4M3 9h9M3 12h9M3 15h9" stroke="#3a90d0" /></Page>,
  down: <svg width="17" height="17"><path d="M5 .5h7v8h4.500l-8 8-8-8H5z" fill="#3a96e6" stroke="#2b78c0" strokeWidth=".6" /></svg>,
  music: <svg width="14" height="18"><ellipse cx="5" cy="15" rx="4" ry="2.800" fill="#14a0f4" /><path d="M7 0h2c0 4 4 4 3 10-1-3-2-3-3-3v8H7z" fill="#14a0f4" /></svg>,
  desk: <svg width="18" height="13"><path d="M.5.5h17v12H.5z" fill="#1a9cf4" stroke="#0c78c8" /><path d="M1 12h16" stroke="#064" /></svg>,
  diskc: <svg width="20" height="17" viewBox="0 0 20 17"><path d="M1 1h4v4H1zM6 0h4v5H6zM1 6h4v3H1zM6 6h4v4H6z" fill="#12b4f4" /><path d="M2 12l9-4 8 2v2l-9 4-8-2z" fill="#bcbfc2" /><path d="M2 12l8 2v2.500l-8-2z" fill="#4a4a4a" /></svg>,
  disk: <svg width="20" height="17" viewBox="0 0 20 17"><path d="M2 12l9-4 8 2v2l-9 4-8-2z" fill="#cdd0d3" /><path d="M2 12l8 2v2.500l-8-2z" fill="#4a4a4a" /></svg>,
};

/* ---------- data ---------- */
const keywordData = `1,0.01,2018,(co2) c 12 o 16|1,0.00,2019,2 d|1,0.00,2011,2 dimensional fluorescen...|1,0.00,1996,2 phase|2,0.00,2019,2nd harmonic generation|1,0.00,2019,3d resistivity method|1,0.00,2010,3d-hadamard transform|1,0.00,2010,3d-transform coefficient s...|1,0.00,2020,abnormal galloping mom...|1,0.00,2015,absorption measurements|2,0.00,2011,accumulation|1,0.00,2017,achromatic metasurfaces|1,0.00,2014,acid gas injection (agi)|1,0.00,2014,acoustic emission techniq...|1,0.00,2004,acoustic emissions (aes)|1,0.00,2014,acoustic localization|1,0.00,2019,acoustic phonons|2,0.00,2023,acoustic sensors|1,0.00,2002,acoustic signal processing|1,0.00,2019,acoustic vibrations|1,0.00,2015,acquisition|1,0.00,2010,adaptive filtering|1,0.00,2020,adaptive galloping signal ...|1,0.00,2010,adaptive golomb entropy c...|1,0.00,2020,additive manufacturing|1,0.00,2020,adsorption|1,0.00,2017,airglow|1,0.00,2016,aldehydes|8,0.10,2017,algorithm|1,0.00,2014,alumina|1,0.00,2015,alzheimers diagnosis|1,0.00,2015,alzheimers disease|1,0.00,2004,amine resin systems|1,0.00,2015,ammonia sensing|1,0.00,2020,amputees|1,0.00,2018,analyzer|1,0.00,2018,anisotropic media|1,0.00,2009,apparatus|2,0.01,2012,aquifer|1,0.00,2018,arch dam|1,0.04,2018,architecture|3,0.02,2016,array|1,0.00,2002,array sensor|1,0.00,2014,arrays|2,0.02,2022,artificial intelligence|1,0.00,2015,artificial neural network|2,0.10,2022,artificial neural networks|1,0.00,2016,assistant analysis system|1,0.00,2017,astigmatism|1,0.00,2011,at line|1,0.00,2014,au nanodisk array|1,0.00,2020,automated history match|1,0.00,2017,axial force|1,0.00,2014,bandpass filter (bpf)|1,0.00,2012,bank filtration|1,0.00,2018,base metal exploration|1,0.00,2006,beam`
  .split('|').map(r => r.split(','));

const menus = ['File', 'Data', 'Visualization', 'Display', 'Nodes', 'Links', 'Labels', 'Clusters', 'Overlays', 'Filters', 'Summary', 'Export', 'Windows', 'Help'];

const stops: [number, number[]][] = [[0, [8, 29, 88]], [4, [37, 52, 148]], [8, [34, 94, 168]], [11.5, [29, 145, 192]], [15, [65, 182, 196]], [19, [127, 205, 187]], [23, [199, 233, 180]], [27, [237, 248, 177]], [30, [253, 254, 208]]];
const yearColor = (i: number) => {
  const k = Math.max(1, stops.findIndex(s => s[0] >= i));
  const [a, ca] = stops[k - 1], [b, cb] = stops[k], t = (i - a) / (b - a);
  return `rgb(${ca.map((v, j) => Math.round(v + (cb[j] - v) * t)).join(',')})`;
};

type Ring = [number, string];
const T1 = '#8fd3ba', T2 = '#9edbb8', B1 = '#2394c2', B2 = '#34a5c4', Y1 = '#f8fccb', Y2 = '#edf7b1';
const nodes: { x: number; y: number; rings: Ring[]; line?: string; dot?: boolean }[] = [
  { x: 651, y: 152, rings: [[10, T1]], line: '#6a9a88' }, { x: 718, y: 214, rings: [[17, T1]], dot: true }, { x: 667, y: 240, rings: [[10, '#e0f3b2']], line: '#aab' },
  { x: 698, y: 265, rings: [[10, T2]], line: '#6a9a88' }, { x: 637, y: 273, rings: [[10, T2]], line: '#6a9a88' }, { x: 628, y: 319, rings: [[10, '#b0e1b6']], line: '#7a9a88' }, { x: 665, y: 328, rings: [[10, T2]], line: '#6a9a88' },
  { x: 733, y: 322, rings: [[46, Y1], [38, '#f3fabf'], [30, Y2], [22, '#dff2b4'], [15, '#d0ecb5'], [6, T1]], line: '#aaa98a' },
  { x: 771, y: 343, rings: [[29, Y2], [16, T1], [6, '#2267ad']], line: '#aaa98a', dot: true },
  { x: 821, y: 310, rings: [[22, '#f6fbc5'], [12, '#c3e8b6'], [6, '#56b8bf']], line: '#aaa98a' },
  { x: 785, y: 206, rings: [[11, B1]] }, { x: 836, y: 203, rings: [[10, B1]] }, { x: 778, y: 256, rings: [[10, B1]] }, { x: 843, y: 251, rings: [[10, B1]] },
  { x: 902, y: 172, rings: [[17, '#e3f4b2']], dot: true }, { x: 970, y: 214, rings: [[21, Y2], [10, T2]], line: '#aaa98a' },
  { x: 1029, y: 205, rings: [[27, '#f9fdcf'], [14, Y2]], line: '#aaa98a', dot: true }, { x: 1144, y: 230, rings: [[19, '#fbfdd0']], dot: true },
  { x: 1078, y: 240, rings: [[17, '#ebf7b1']], dot: true }, { x: 1006, y: 257, rings: [[16, '#fafdd0']], dot: true }, { x: 959, y: 266, rings: [[17, T2]], dot: true },
  { x: 900, y: 264, rings: [[23, Y1], [15, '#e3f4b2'], [10, T2]], line: '#aaa98a' }, { x: 1016, y: 306, rings: [[27, Y1], [20, '#ddf1b4'], [14, T2]], line: '#aaa98a' },
  { x: 971, y: 329, rings: [[17, '#f4fac2']], dot: true }, { x: 915, y: 351, rings: [[17, '#f7fccb']], dot: true },
  { x: 1094, y: 306, rings: [[17, Y1], [12, '#dff2c0'], [7, B1]], line: '#aaa98a' }, { x: 1150, y: 339, rings: [[10, '#2b9dc3']], line: '#4a8a9a' }, { x: 1223, y: 355, rings: [[10, '#6cc5bd']], line: '#5a9a90' },
  { x: 1349, y: 240, rings: [[10, '#7fcdbb']], line: '#5a9a90' }, { x: 1393, y: 275, rings: [[10, '#7fcdbb']], line: '#5a9a90' },
  { x: 1304, y: 290, rings: [[28, Y1], [20, Y2], [7, '#6cc5bd']], line: '#aaa98a' }, { x: 1350, y: 365, rings: [[10, '#e8f5b2']], line: '#aaa98a' }, { x: 1354, y: 334, rings: [[13, '#7fcdbb'], [10, '#6cc5bd']], line: '#5a9a90' },
  { x: 1436, y: 544, rings: [[10, '#2b9dc3']], line: '#4a8a9a' }, { x: 1474, y: 590, rings: [[10, '#2b9dc3']], line: '#4a8a9a' }, { x: 1527, y: 615, rings: [[10, T1]], line: '#6a9a88' },
  { x: 1445, y: 668, rings: [[25, '#c7e9b4'], [15, T1], [5, '#1d82ba']], line: '#ff00e0' }, { x: 1504, y: 651, rings: [[10, B2]], line: '#4a8a9a' }, { x: 1549, y: 681, rings: [[10, B2]], line: '#4a8a9a' },
  { x: 1503, y: 721, rings: [[10, B2]], line: '#4a8a9a' }, { x: 1462, y: 747, rings: [[10, T1]], line: '#6a9a88' }, { x: 1559, y: 735, rings: [[21, Y1], [7, '#c3e8b6']], line: '#aaa98a' },
  { x: 1804, y: 900, rings: [[10, B2]], line: '#4a8a9a' }, { x: 1752, y: 944, rings: [[13, '#c3e6ae'], [9, B2]], line: '#9ab08a', dot: true },
];
const diamond = (x: number, y: number, r: number) => `${x},${y - r} ${x + r},${y} ${x},${y + r} ${x - r},${y}`;
const links: [string, string][] = [
  ['#dff1ea', 'M651 152Q690 155 706 120M651 152Q670 195 718 214M718 214Q690 160 710 115M718 214Q715 270 733 322M637 273Q660 258 698 265M637 273Q640 300 665 328M698 265Q700 300 733 322M698 265Q660 295 665 328M628 319Q700 345 733 322M637 273Q670 315 733 322'],
  ['#cfe6f2', 'M785 206Q795 235 778 256M785 206Q840 220 843 251M836 203Q795 215 778 256M836 203Q852 225 843 251M778 256Q820 270 821 310M785 206Q830 250 821 310M843 251Q850 290 821 310M836 203Q860 280 821 310M778 256Q800 245 843 251'],
  ['#eef6e0', 'M667 240Q680 300 733 322M733 322Q790 260 900 264M902 172Q880 220 900 264M900 264Q980 290 1016 306M1029 205Q1040 260 1016 306M1078 240Q1060 290 1016 306M1029 205Q1070 215 1078 240M971 329Q960 350 955 362M821 310Q840 340 843 362'],
  ['#d9efea', 'M970 214Q940 260 900 264M900 264Q940 300 1016 306M959 266Q980 300 1016 306M970 214Q970 280 1016 306M900 264Q940 250 959 266M1016 306Q1070 320 1110 362M1304 290Q1240 310 1223 355M1223 355Q1190 370 1200 362M1349 240Q1335 275 1304 290M1349 240Q1380 250 1393 275M1393 275Q1350 305 1304 290M1393 275Q1360 300 1354 334M1304 290Q1320 325 1354 334M1349 240Q1330 290 1354 334M1354 334Q1320 340 1310 375M1354 334Q1330 350 1325 375M1354 334Q1360 350 1358 375M1354 334Q1390 350 1400 375M1354 334Q1370 345 1380 375'],
  ['#cfe8f0', 'M1094 306Q1140 315 1150 339M1094 306Q1080 340 1092 365M1150 339Q1130 355 1128 366M1436 544Q1470 560 1474 590M1474 590Q1440 585 1400 600M1445 668Q1470 635 1504 651M1504 651Q1545 655 1549 681M1445 668Q1500 650 1549 681M1504 651Q1485 690 1503 721M1549 681Q1510 690 1503 721M1445 668Q1460 710 1503 721M1804 900Q1760 900 1738 878M1804 900Q1765 910 1752 944M1752 944Q1725 920 1730 878'],
  ['#e0f1ea', 'M1527 615Q1470 620 1445 668M1445 668Q1470 700 1462 747M1445 668Q1480 725 1559 735'],
];
const labels: [string, number, number, number][] = [
  ['current measurement', 723, 206, 12], ['electromagnetic force', 774, 203, 12], ['displacement', 741, 256, 12], ['fbg sensor', 813, 251, 12],
  ['model', 880, 264, 15], ['fiber bragg grating', 756, 310, 15], ['system', 706, 322, 16], ['heat', 1000, 306, 16], ['fiber-optic sensing', 1041, 306, 12],
  ['flow', 1292, 291, 12], ['aquifer', 1330, 334, 15], ['e detection', 1429, 668, 16], ['ensors', 1427, 618, 12], ['ter', 1428, 783, 14], ['ture sensor', 1428, 816, 12], ['ray', 1427, 863, 12], ['el', 1427, 886, 12],
];

const Graph = () => (
  <svg width="100%" height="100%">
    <defs>
      <linearGradient id="pale" x1="0" y1="0" x2="0" y2="1"><stop offset="0" stopColor="#fdf9f1" /><stop offset="1" stopColor="#fffefc" /></linearGradient>
    </defs>
    <g transform="translate(-403 -135)">
      <text x="448" y="398" fontFamily="Liberation Sans, sans-serif" fontWeight="700" fontSize="432" fill="#fcfbf7">teSpace</text>
      <rect x="1400" y="626" width="113" height="330" fill="url(#pale)" /><rect x="1522" y="715" width="310" height="241" fill="url(#pale)" />
      <path d="M1460 1030L1930 974V1020L1700 1030z" fill="#fdfaf4" />
      {links.map(([c, d]) => <path key={c} d={d} stroke={c} fill="none" strokeWidth="1.300" />)}
      {nodes.map(n => (
        <g key={`${n.x}-${n.y}`}>
          {n.rings.map(([r, c], i) => <polygon key={r} points={diamond(n.x, n.y, r)} fill={c} stroke={i === 0 ? n.line : undefined} strokeWidth={n.line === '#ff00e0' ? 1.6 : 0.8} />)}
          {n.dot && <rect x={n.x - 1} y={n.y - 1} width="2" height="2" fill="#fff" />}
        </g>
      ))}
      {labels.map(([t, x, y, s]) => (
        <text key={t} x={x} y={y} fontFamily="Liberation Sans, sans-serif" fontWeight="700" fontSize={s} fill="#990000" style={{ textShadow: '2px 2px 0 #ccc' }}>{t}</text>
      ))}
    </g>
  </svg>
);

const tools: React.ReactNode[][] = [
  [<Tool key="a" aria-label="Save"><SaveI /></Tool>, <Tool key="b" $on aria-label="Record"><ClapI /></Tool>, <Tool key="c" aria-label="Export PDF"><PdfI /></Tool>],
  [<Tool key="a" $w={33} aria-label="Play"><PlayI /></Tool>, <Tool key="b" $w={33} aria-label="Pause"><PauseI /></Tool>],
  [<Tool key="a" aria-label="Rotate"><RotI /></Tool>, <Tool key="b" aria-label="Burst"><StarI /></Tool>],
  [<Tool key="a" aria-label="Rainbow"><RainbowI /></Tool>, <Tool key="b" aria-label="Palette"><GridI /></Tool>, <Tool key="c" $w={30} aria-label="Dark"><VaseI inv /></Tool>, <Tool key="d" $w={30} aria-label="Light"><VaseI /></Tool>, <Tool key="e" aria-label="Colors"><SplashI /></Tool>],
  [<Tool key="a"><ToolWord $c="#f00000" $b>LSI</ToolWord></Tool>, <Tool key="b"><ToolWord $c="#c01818">LLR</ToolWord></Tool>, <Tool key="c" $h={31}><ToolWord $c="#b80000">USR</ToolWord></Tool>, <Tool key="d" $off><GptTile>GPT</GptTile></Tool>],
  [<Tool key="a" aria-label="RGB"><DotsI a="#e01010" b="#10e010" c="#1010d0" s="#ccc" /></Tool>, <Tool key="b" aria-label="Tree"><DotsI a="#fff010" b="#fff010" c="#fff010" s="#f09020" /></Tool>, <Tool key="c" aria-label="Rings"><RingI /></Tool>],
  [<Tool key="a" aria-label="Network"><NetI /></Tool>, <Tool key="b" $w={37} $off aria-label="Circle"><LoopI /></Tool>, <Tool key="c" aria-label="Timeline"><TimeI /></Tool>, <Tool key="d" $off aria-label="Timezone"><MistI /></Tool>, <Tool key="e" $off aria-label="Landscape"><PeakI /></Tool>],
];

const tree: [string, string, boolean, boolean][] = [
  ['folder', '文献', true, true], ['wps', 'WPS云盘', false, true], ['one', 'OneDrive - Personal', false, true], ['pc', '此电脑', false, false],
  ['cube', '3D 对象', true, false], ['video', '视频', true, false], ['pic', '图片', true, false], ['doc', '文档', true, false], ['down', '下载', true, false],
  ['music', '音乐', true, false], ['desk', '桌面', true, false], ['diskc', '本地磁盘 (C:)', true, false], ['disk', '本地磁盘 (D:)', true, false], ['disk', '本地磁盘 (E:)', true, false],
];
const files: [string, string, string, string][] = [
  ['page', '285.graphml', '2024-12-15 23:41', 'GRAPHML 文件'], ['page', 'CitationBurst.in', '2024-12-15 23:41', 'IN 文件'], ['page', 'CitationBurst.out', '2024-12-15 23:41', 'OUT 文件'],
  ['json', 'citespace.config.json', '2024-12-15 23:37', 'JSON 源文件'], ['page', 'citespace.parameters', '2024-12-15 23:41', 'PARAMETERS'], ['json', 'citespace.signature.json', '2024-12-15 23:41', 'JSON 源文件'],
  ['png', 'CO-DESC_关键词fiberOpticSensing和...', '2024-12-16 0:06', 'PNG 图片文件'],
];
const fileIcon = (k: string) =>
  k === 'page' ? <Page w={15} /> : k === 'json'
    ? <Page w={15}><path d="M6 6c-2 0-1 3-2 3.500 1 .5 0 3.500 2 3.500M9 6c2 0 1 3 2 3.500-1 .5 0 3.500-2 3.500" stroke="#b8b020" fill="none" strokeWidth="1.200" /></Page>
    : <svg width="15" height="19" viewBox="0 0 15 19"><path d="M2 1h9l4 4v13H2z" fill="#f4faf2" /><path d="M11 1l4 4h-4zM0 3h9v6H0z" fill="#8cc088" /><path d="M5 15c1-3 6-4 8 0z" fill="#cfe6d4" /></svg>;

const GroupBox = ({ w, pad, name, children }: { w: number; pad: number; name: string; children: React.ReactNode }) => (
  <Group $w={w} $pad={pad}><GroupBody>{children}</GroupBody><GroupName $pad={pad}>{name}</GroupName></Group>
);

const Explorer = () => (
  <ExplorerWin aria-label="project">
    <ExTop>
      <Quick><Folder h={17} /><QSep /><Page><Check /></Page><Folder h={17} /><Tri d="down" /><QSep /></Quick>
      <ManageTab>管理</ManageTab>
      <ExTitle>project</ExTitle>
      <WinButtons $gap={45} $end={24}><WinButton aria-label="最小化"><Min /></WinButton><WinButton aria-label="最大化"><Max /></WinButton><WinButton aria-label="关闭"><Close /></WinButton></WinButtons>
    </ExTop>
    <Tabs role="tablist">
      <Tab $w={70} $kind="file">文件</Tab><Tab $w={64} $kind="on">主页</Tab><Tab $w={66}>共享</Tab><Tab $w={63}>查看</Tab><Tab $w={96} $kind="ctx">图片工具</Tab>
      <Fill />
      <Row $h={30} $gap={9}>
        <Chevron d="up" w={13} c="#999" sw={1.3} />
        <svg width="24" height="20"><circle cx="10" cy="10" r="9.500" fill="#0068cc" stroke="#0a4a8a" /><text x="10" y="15" fill="#fff" fontSize="14" fontWeight="700" textAnchor="middle">?</text></svg>
      </Row>
    </Tabs>
    <Ribbon>
      <GroupBox w={300} pad={7} name="剪贴板">
        <Big $w={64} $off><BigIcon><PinI /></BigIcon>固定到<br />快速访问</Big>
        <Big $w={50}><BigIcon><CopyI /></BigIcon>复制</Big>
        <Big $w={50} $off><BigIcon><PasteI /></BigIcon>粘贴</Big>
        <SmallList $pad={5}><Small $h={26}><CutI />剪切</Small><Small $h={26}><PathI />复制路径</Small><Small $h={26} $off><ShortI />粘贴快捷方式</Small></SmallList>
      </GroupBox>
      <GroupBox w={220} pad={3} name="组织">
        <Big $w={51}><BigIcon><BigFolder><path d="M33 24v8H22v5l-9-9 9-9v5z" fill="#3a96e6" stroke="#2b78c0" strokeWidth=".6" /></BigFolder></BigIcon>移动到<Tri d="down" s={7} /></Big>
        <Big $w={51}><BigIcon><BigFolder><path d="M14 1h10l3 3v17H14z" fill="#fff" stroke="#888" /><path d="M19 5h10l3 3v17H19z" fill="#fff" stroke="#777" /><path d="M21 11h9M21 14h9M21 17h9M21 20h9" stroke="#5a9ae0" /></BigFolder></BigIcon>复制到<Tri d="down" s={7} /></Big>
        <VSep />
        <Big $w={52}><BigIcon><DelI /></BigIcon>删除<Tri d="down" s={7} /></Big>
        <Big $w={48}><BigIcon><RenI /></BigIcon>重命名</Big>
      </GroupBox>
      <GroupBox w={163} pad={2} name="新建">
        <Big $w={52}><BigIcon><Folder w={25} h={37} /></BigIcon>新建<br />文件夹</Big>
        <SmallList $pad={4}><Small $h={26}><NewI />新建项目<Tri d="down" s={6} /></Small><Small $h={26}><EasyI />轻松访问<Tri d="down" s={6} /></Small></SmallList>
      </GroupBox>
      <GroupBox w={152} pad={3} name="打开">
        <Big $w={50}><BigIcon><Page w={29} h={37}><Check /></Page></BigIcon>属性<Tri d="down" s={7} /></Big>
        <SmallList $pad={4}><Small $h={30}><OpenI />打开<Tri d="down" s={6} /></Small><Small $h={29}><EditI />编辑</Small><Small $h={29}><HistI />历史记录</Small></SmallList>
      </GroupBox>
      <GroupBox w={102} pad={3} name="选择">
        <SmallList $pad={5}><Small $h={26}><SelI on={[0, 1, 2, 3]} />全部选择</Small><Small $h={26}><SelI on={[]} />全部取消</Small><Small $h={26}><SelI on={[1, 2]} />反向选择</Small></SmallList>
      </GroupBox>
    </Ribbon>
    <AddressRow>
      <NavIcon $w={39} aria-label="后退"><svg width="16" height="12"><path d="M15 6H1M6 1L1 6l5 5" fill="none" stroke="#666" strokeWidth="1.500" /></svg></NavIcon>
      <NavIcon $w={33} aria-label="前进"><svg width="16" height="12"><path d="M0 6h14M9 1l5 5-5 5" fill="none" stroke="#ccc" strokeWidth="1.500" /></svg></NavIcon>
      <NavIcon $w={25} aria-label="最近"><Chevron d="down" w={9} sw={2} /></NavIcon>
      <NavIcon $w={21} aria-label="上移"><svg width="12" height="16"><path d="M6 15V1M1 6l5-5 5 5" fill="none" stroke="#666" strokeWidth="1.500" /></svg></NavIcon>
      <Address>
        <Folder h={17} /><CrumbSep $l={12} $r={9}>«</CrumbSep><Crumb href="#">CiteSpace_WoS</Crumb><CrumbSep $l={12} $r={9}><Chevron d="right" w={9} /></CrumbSep><Crumb href="#">project</Crumb><Fill />
        <Row $h={26} $gap={3}><Chevron d="down" w={11} sw={2} />
          <svg width="21" height="26"><path d="M1 0v26" stroke="#d9d9d9" /><path d="M16.500 9a5.500 5.500 0 1 1-6-.5M8 7h4v4" fill="none" stroke="#666" strokeWidth="1.500" /></svg></Row>
      </Address>
      <SearchBox><SearchInput aria-label="搜索" placeholder="在 project 中搜索" />
        <svg width="14" height="14"><circle cx="9" cy="5" r="3.800" fill="none" stroke="#555" strokeWidth="1.500" /><path d="M6 8l-5 5" stroke="#555" strokeWidth="1.800" /></svg></SearchBox>
    </AddressRow>
    <Body>
      <Tree>{tree.map(([k, t, deep, gap]) => <TreeItem key={t} $deep={deep} $gap={gap}><TreeIcon>{treeIcons[k]}</TreeIcon>{t}</TreeItem>)}</Tree>
      <TreeScroll><ScrollUp aria-label="向上"><Chevron d="up" w={10} c="#505050" sw={2} /></ScrollUp><ScrollThumb /></TreeScroll>
      <FilePane>
        <Files>
          <colgroup><col width="322" /><col width="180" /><col width="148" /></colgroup>
          <thead><tr><th>名称<SortMark><Chevron d="up" w={9} sw={1} c="#444" /></SortMark></th><th>修改日期</th><th>类型</th></tr></thead>
          <tbody>{files.map(([k, n, d, t]) => <FileRow key={n} $sel={k === 'png'}><td><FileName>{fileIcon(k)}{n}</FileName></td><td>{d}</td><td>{t}</td></FileRow>)}</tbody>
        </Files>
      </FilePane>
    </Body>
  </ExplorerWin>
);

const Slider = ({ w = 100, value, max = 51, name }: { w?: number; value: number; max?: number; name: string }) => (
  <HBar $w={w}>
    <HBtn aria-label="Decrease"><Tri d="left" /></HBtn>
    <Range aria-label={name} min={0} max={max} defaultValue={value} />
    <HBtn aria-label="Increase"><Tri d="right" /></HBtn>
  </HBar>
);
const Check2 = ({ children }: { children: string }) => <CheckLabel><CheckBox />{children}</CheckLabel>;
const Setting = ({ id, label, val, pos, kind = 'a' }: { id: string; label: string; val: string; pos: number; kind?: 'a' | 'link' | 'cluster' }) => (
  <Row $h={30} $pad={kind === 'link' ? 3 : 0}>
    <Name htmlFor={id} $w={kind === 'cluster' ? 60 : 58} $mr={kind === 'cluster' ? 49 : 45} $sm={kind !== 'cluster'}>{label}</Name>
    <Field id={id} $w={kind === 'cluster' ? 37 : 48} $off $right defaultValue={val} />
    <Slider value={pos} name={label} />
  </Row>
);
const LabelGroup = ({ id, title, by, v }: { id: string; title: string; by: string; v: [string, number][] }) => (
  <Frame $h={146} $top={8}>
    <Legend>{title}</Legend>
    <Row $h={25} $pad={26}>
      <ComboWrap><Combo aria-label={title} defaultValue={by}><option>{by}</option></Combo></ComboWrap>
      <Check2>Show Frequency</Check2>
    </Row>
    <Row $h={5} />
    {['Threshold', 'Font Size', 'Node Size'].map((n, i) => <Setting key={n} id={`${id}${i}`} label={n} val={v[i][0]} pos={v[i][1]} />)}
  </Frame>
);

const ControlPanel = () => (
  <PanelWin aria-label="Control Panel">
    <TitleBar $h={37}>
      <Row $h={37} $pad={9} $gap={5}><Java /><TitleText>Control Panel</TitleText></Row><Fill />
      <WinButtons $gap={46} $end={23}><WinButton aria-label="Minimize"><Min /></WinButton><WinButton aria-label="Maximize"><Max /></WinButton><WinButton aria-label="Close"><Close /></WinButton></WinButtons>
    </TitleBar>
    <Row $h={2} />
    <TabRow><PTab $w={77}>Colormap</PTab><PTab $w={80}>Burstness</PTab><PTab $w={62}>Search</PTab><PTab $w={68}>Clusters</PTab></TabRow>
    <TabRow><PTab $w={110} $on>Labels</PTab><PTab $w={110}>Layout</PTab><PTab $w={104}>Views</PTab></TabRow>
    <PBody>
      <LabelGroup id="kw" title="Keyword | Term | Overlay Labels" by="By Degree" v={[['4', 1], ['5', 1], ['8', 4]]} />
      <LabelGroup id="nd" title="Node Labels" by="By Citation" v={[['20', 5], ['5', 6], ['1', 1]]} />
      <Frame $h={85} $top={12} $mb={3}>
        <Legend>Link Labels</Legend>
        <Row $h={16} $pad={24} $gap={13}><Check2>Show Link Labels</Check2><Check2>Show Link Strengths</Check2></Row>
        <Row $h={8} />
        <Setting id="lk" label="Font Size" val="8" pos={8} kind="link" />
      </Frame>
      <Frame $h={141} $top={8}>
        <Legend>Cluster Labels</Legend>
        <Setting id="cl0" label="Threshold" val="0" pos={0} kind="cluster" />
        <Setting id="cl1" label="Font Size" val="16" pos={8} kind="cluster" />
        <Row $h={25} $pad={65}><Check2>Show Cluster Labels Over Time</Check2></Row>
        <Row $h={24} $pad={65}><Name htmlFor="mx">Max Length</Name><Field id="mx" $w={37} $h={16} $off $right defaultValue="100" /><Slider w={70} value={10} max={20} name="Max Length" /></Row>
      </Frame>
      <Frame $h={56} $top={12}>
        <Legend>Minimizing Overlaps</Legend>
        <Row $h={16} $pad={57} $gap={13}><Check2>Cluster Labels</Check2><Check2>Node Labels</Check2></Row>
      </Frame>
    </PBody>
  </PanelWin>
);

export default function App() {
  return (
    <Desktop>
      <GlobalStyle />
      <Upper>
        <BehindStrip />
        <AppWindow>
          <TitleBar $h={30}>
            <Row $h={30} $pad={2} $gap={5}><Java /><TitleText>CiteSpace: Display Merged - (c) 2003-2024 Chaomei Chen - Project Home: G:\CiteSpace_WoS\project</TitleText></Row><Fill />
            <WinButtons $gap={46} $end={25}><WinButton aria-label="Minimize"><Min /></WinButton><WinButton aria-label="Restore"><Restore /></WinButton><WinButton aria-label="Close"><Close /></WinButton></WinButtons>
          </TitleBar>
          <Chrome>
            <MenuBar>{menus.map(m => <MenuItem key={m}>{m}</MenuItem>)}</MenuBar>
            <ToolBar><Grip />{tools.map((g, i) => <ToolGroup key={i}>{g}</ToolGroup>)}</ToolBar>
          </Chrome>
          <Split>
            <TablePane>
              <Keywords>
                <colgroup><ColV /><ColC /><ColCe /><ColY /><col /></colgroup>
                <thead><tr><th>Visible</th><th>Count</th><th>Central...</th><th>Year</th><th>Keywords</th></tr></thead>
                <tbody>
                  {keywordData.map(([c, ce, y, k]) => (
                    <tr key={k}><td><Tick defaultChecked aria-label={k} /></td><td>{c}</td><td>{ce}</td><td>{y}</td><td>{k}</td></tr>
                  ))}
                </tbody>
              </Keywords>
              <VBar><VBarBtn aria-label="Up"><Tri d="up" /></VBarBtn><VThumb /><Fill /><VBarBtn aria-label="Down"><Tri d="down" /></VBarBtn></VBar>
            </TablePane>
            <Divider><Tri d="left" c="#4a6aa0" /><Tri d="right" c="#4a6aa0" /></Divider>
            <GraphPane>
              <SearchBar>
                <MetalButton>Spotlight</MetalButton><MetalButton>Show/Hide Citation/Frequency Burst</MetalButton><MetalButton>&gt;&gt;&gt;</MetalButton>
                <Field $w={81} $off aria-label="Burst term" /><MetalButton>&lt;&lt;&lt;</MetalButton>
                <Field $w={168} aria-label="Search" defaultValue="Search: ti:q1 | fu:*" />
                <label htmlFor="nclusters"># clusters</label><Field id="nclusters" $w={37} $off />
              </SearchBar>
              <Years>{Array.from({ length: 31 }, (_, i) => <Year key={i} $c={yearColor(i)} $mark={i % 5 === 1} />)}</Years>
              <Canvas><Graph /></Canvas>
            </GraphPane>
          </Split>
        </AppWindow>
        <Explorer />
        <ControlPanel />
      </Upper>
      <TaskBar>
        <TaskPart $w={70} $c="#38352a" />
        <TaskPart $w={360} $c="#f0f0f0"><svg width="72" height="9"><circle cx="21" cy="20" r="20" fill="#f2c53d" /><circle cx="21" cy="6" r="3" fill="#fbe9a0" /></svg></TaskPart>
        <TaskPart $w={374} $c="#464646" /><TaskPart $w={61} $c="#6e6e6e" /><TaskPart $w={565} $c="#464646" /><TaskRest />
      </TaskBar>
      <Marks>
        <polygon points="208,44 663,227 665,224 676,238 658,240 661,235" fill="#ff2010" />
        <polygon points="92,83 909,805 914,803 919,822 903,819 904,811" fill="#ff2010" />
        <rect x="1553" y="243" width="306" height="153" rx="2" fill="none" stroke="#ff2010" strokeWidth="4" />
      </Marks>
    </Desktop>
  );
}
